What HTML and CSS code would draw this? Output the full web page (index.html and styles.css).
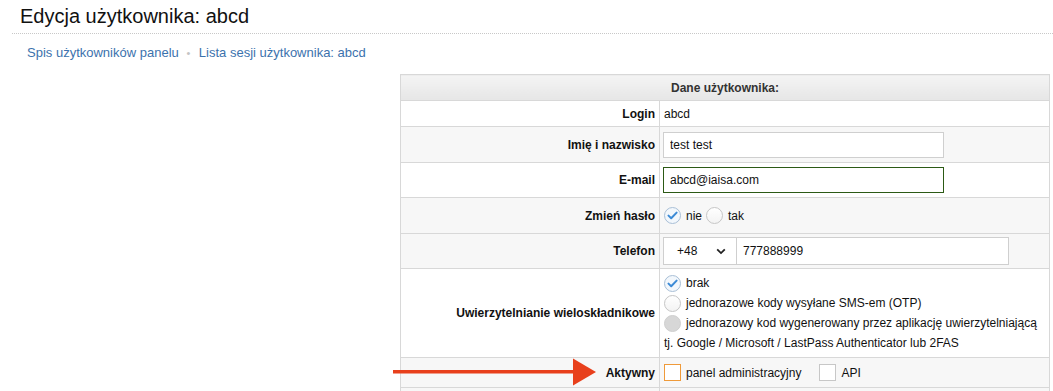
FILE: index.html
```html
<!DOCTYPE html>
<html lang="pl">
<head>
  <meta charset="UTF-8">
  <title>Edycja użytkownika: abcd</title>
  <link rel="stylesheet" href="styles.css">
</head>
<body>
  <h1 class="page-title">Edycja użytkownika: abcd</h1>

  <div class="crumbs">
    <a href="#">Spis użytkowników panelu</a>
    <span class="dot">&bull;</span>
    <a href="#">Lista sesji użytkownika: abcd</a>
  </div>

  <div class="form-wrap">
    <table class="user-table">
      <tr class="head">
        <th colspan="2">Dane użytkownika:</th>
      </tr>
      <tr class="r-login">
        <td class="label">Login</td>
        <td class="value">abcd</td>
      </tr>
      <tr class="alt r-name">
        <td class="label">Imię i nazwisko</td>
        <td class="value"><input class="field" type="text" value="test test"></td>
      </tr>
      <tr class="r-mail">
        <td class="label">E-mail</td>
        <td class="value"><input class="field focused" type="text" value="abcd@iaisa.com"></td>
      </tr>
      <tr class="alt r-pass">
        <td class="label">Zmień hasło</td>
        <td class="value">
          <div class="opts">
            <span class="radio checked">
              <svg width="11" height="9" viewBox="0 0 11 9"><path d="M1.5 4.6 L4.2 7.2 L9.6 1.6" fill="none" stroke="#3b8ad6" stroke-width="2" stroke-linecap="round" stroke-linejoin="round"/></svg>
            </span>
            <span class="opt-text">nie</span>
            <span class="radio"></span>
            <span class="opt-text">tak</span>
          </div>
        </td>
      </tr>
      <tr class="alt r-phone">
        <td class="label">Telefon</td>
        <td class="value">
          <div class="phone">
            <div class="select">+48
              <svg class="chev" width="10" height="7" viewBox="0 0 10 7"><path d="M1.2 1.3 L5 5.1 L8.8 1.3" fill="none" stroke="#222" stroke-width="1.8"/></svg>
            </div>
            <input class="field phone-num" type="text" value="777888999">
          </div>
        </td>
      </tr>
      <tr class="r-mfa">
        <td class="label">Uwierzytelnianie wieloskładnikowe</td>
        <td class="value mfa">
          <div class="line">
            <span class="radio checked">
              <svg width="11" height="9" viewBox="0 0 11 9"><path d="M1.5 4.6 L4.2 7.2 L9.6 1.6" fill="none" stroke="#3b8ad6" stroke-width="2" stroke-linecap="round" stroke-linejoin="round"/></svg>
            </span>brak
          </div>
          <div class="line"><span class="radio"></span>jednorazowe kody wysyłane SMS-em (OTP)</div>
          <div class="line"><span class="radio disabled"></span>jednorazowy kod wygenerowany przez aplikację uwierzytelniającą</div>
          <div class="line">tj. Google / Microsoft / LastPass Authenticator lub 2FAS</div>
        </td>
      </tr>
      <tr class="alt r-active">
        <td class="label">Aktywny</td>
        <td class="value">
          <div class="opts">
            <span class="check orange"></span>
            <span class="opt-text wide">panel administracyjny</span>
            <span class="check"></span>
            <span class="opt-text">API</span>
          </div>
        </td>
      </tr>
      <tr class="alt last">
        <td class="label"></td>
        <td class="value"></td>
      </tr>
    </table>

    <svg class="arrow" width="204" height="28" viewBox="0 0 204 28">
      <rect x="0" y="12" width="182" height="3.5" fill="#e8401c"/>
      <path d="M180 0.5 L203 14 L180 27.5 Z" fill="#e8401c"/>
    </svg>
  </div>
</body>
</html>
```

FILE: styles.css
```css
body {
  margin: 0;
  font-family: "Liberation Sans", Arial, Helvetica, sans-serif;
  font-size: 12px;
  color: #111;
  background: #fff;
}
.page-title {
  margin: 0 0 0 12px;
  padding: 4px 0 5px 8px;
  font-size: 20px;
  font-weight: normal;
  line-height: 24px;
  color: #111;
  border-bottom: 1px dotted #c8c8c8;
}
.crumbs {
  padding: 10px 0 0 27px;
  font-size: 13px;
  line-height: 17px;
  height: 23px;
}
.crumbs a {
  color: #3c72ad;
  text-decoration: none;
}
.crumbs .dot {
  color: #c4c4c4;
  font-size: 11px;
  margin: 0 5px 0 4px;
}
.form-wrap {
  position: relative;
  margin-top: 7px;
}
.user-table {
  margin-left: 400px;
  width: 650px;
  border-collapse: collapse;
}
.user-table th,
.user-table td {
  border: 1px solid #d8d8d8;
  padding: 0 4px;
}
.head th {
  height: 25px;
  padding: 0;
  font-weight: bold;
  color: #333;
  background: linear-gradient(#f4f4f4, #e6e6e6);
}
.user-table tr {
  background: #fff;
}
.user-table tr.alt {
  background: #f7f7f7;
}
.r-login td { height: 25px; }
.r-name td { height: 35px; }
.r-mail td { height: 34px; }
.r-pass td { height: 35px; }
.r-phone td { height: 34px; }
.r-mfa td { height: 88px; }
.r-active td { height: 29px; }
.label {
  width: 250px;
  text-align: right;
  font-weight: bold;
  color: #111;
}
.value {
  color: #111;
}
.field {
  display: block;
  box-sizing: border-box;
  width: 281px;
  height: 26px;
  margin: 0 0 0 -1px;
  padding: 0 6px;
  border: 1px solid #cfcfcf;
  background: #fff;
  font-family: inherit;
  font-size: 12px;
  color: #111;
  outline: none;
}
.field.focused {
  border-color: #2c5a15;
}
.opts {
  display: flex;
  align-items: center;
  height: 18px;
}
.opt-text {
  margin-right: 4px;
}
.opt-text.wide {
  margin-right: 18px;
}
.radio {
  display: inline-flex;
  flex: none;
  align-items: center;
  justify-content: center;
  box-sizing: border-box;
  width: 17px;
  height: 17px;
  margin-right: 5px;
  border: 1px solid #c6c6c6;
  border-radius: 50%;
  background: linear-gradient(#fff, #f3f3f3);
}
.radio.checked {
  border-color: #a9bfd6;
  background: #f2f7fc;
}
.radio.disabled {
  border-color: #cfcfcf;
  background: #d7d7d7;
}
.check {
  display: inline-block;
  flex: none;
  box-sizing: border-box;
  width: 17px;
  height: 17px;
  margin-right: 5px;
  border: 1px solid #c7c7c7;
  background: #fff;
}
.check.orange {
  border-color: #ef9a3a;
}
.phone {
  display: flex;
  margin-left: -1px;
}
.select {
  box-sizing: border-box;
  position: relative;
  width: 74px;
  height: 28px;
  line-height: 26px;
  padding-left: 13px;
  border: 1px solid #cfcfcf;
  background: #fff;
  font-size: 12px;
}
.chev {
  position: absolute;
  right: 10px;
  top: 10px;
}
.phone-num {
  width: 272px;
  height: 28px;
  margin: 0;
  border-left: none;
}
.mfa .line {
  display: flex;
  align-items: center;
  height: 20px;
}
.last td {
  height: 6px;
  border-bottom: none;
}
.arrow {
  position: absolute;
  left: 393px;
  top: 284px;
}
```
